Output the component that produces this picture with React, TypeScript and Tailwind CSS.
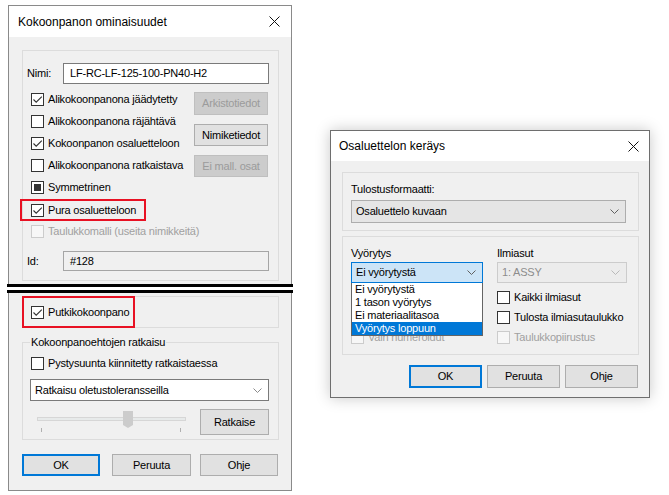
import * as React from "react";

type BoxProps = { checked?: boolean; mixed?: boolean; disabled?: boolean };

// Win10-style 13px checkbox
const Box: React.FC<BoxProps> = ({ checked, mixed, disabled }) => (
  <span
    className={
      "flex h-[13px] w-[13px] shrink-0 items-center justify-center border " +
      (disabled ? "border-[#cccccc] bg-[#f7f7f7]" : "border-[#333333] bg-white")
    }
  >
    {checked && (
      <svg width="11" height="11" viewBox="0 0 11 11">
        <path d="M1.5 5.5 L4.2 8.2 L9.8 2.6" fill="none" stroke="#333" strokeWidth="1.1" />
      </svg>
    )}
    {mixed && <span className="h-[7px] w-[7px] bg-[#333333]" />}
  </span>
);

const Check: React.FC<BoxProps & { label: string; className?: string }> = ({
  label,
  className = "",
  ...rest
}) => (
  <div className={"flex items-center gap-[4px] " + className}>
    <Box {...rest} />
    <span className={rest.disabled ? "text-[#a0a0a0]" : ""}>{label}</span>
  </div>
);

const Btn: React.FC<{
  children: React.ReactNode;
  className?: string;
  primary?: boolean;
  disabled?: boolean;
}> = ({ children, className = "", primary, disabled }) => (
  <div
    className={
      "flex items-center justify-center " +
      (disabled
        ? "border border-[#bfbfbf] bg-[#cccccc] text-[#9b9b9b] "
        : primary
          ? "border-2 border-[#0078d7] bg-[#e1e1e1] "
          : "border border-[#adadad] bg-[#e1e1e1] ") +
      className
    }
  >
    {children}
  </div>
);

const Chevron: React.FC<{ color?: string }> = ({ color = "#606060" }) => (
  <svg width="9" height="5" viewBox="0 0 9 5">
    <path d="M0.5 0.5 L4.5 4.5 L8.5 0.5" fill="none" stroke={color} strokeWidth="1" />
  </svg>
);

const Close: React.FC = () => (
  <svg width="11" height="11" viewBox="0 0 11 11">
    <path d="M0.5 0.5 L10.5 10.5 M10.5 0.5 L0.5 10.5" stroke="#111" strokeWidth="1" />
  </svg>
);

const Slider: React.FC = () => (
  <svg width="169" height="26" viewBox="0 0 169 26">
    <rect x="6.5" y="8.5" width="148" height="3" fill="#e7eaea" stroke="#d6d6d6" />
    <path d="M92 2 H102 V16 L97 19 L92 16 Z" fill="#cccccc" />
    <path d="M10.5 19 V23 M149.5 19 V23" stroke="#b0b0b0" strokeWidth="1" />
  </svg>
);

const PropertiesDialog: React.FC = () => (
  <div className="ml-[7px] flex w-[286px] flex-col">
    {/* upper half */}
    <div className="mx-px mt-[5px] flex h-[279px] flex-col border-x border-t border-[#8a8a8a] bg-[#f0f0f0]">
      <div className="flex h-[31px] shrink-0 items-center justify-between bg-white pl-[9px] pr-[11px] text-[12px] tracking-normal">
        <span>Kokoonpanon ominaisuudet</span>
        <Close />
      </div>
      <div className="flex-1 overflow-hidden">
        <div className="ml-[13px] mr-[12px] mt-[13px] h-[231px] border border-[#dcdcdc] pl-[4px]">
          <div className="mt-[12px] flex items-center">
            <span className="w-[36px]">Nimi:</span>
            <div className="flex h-[21px] w-[206px] items-center border border-[#7a7a7a] bg-white pl-[6px]">
              LF-RC-LF-125-100-PN40-H2
            </div>
          </div>

          <div className="mt-[4px] flex">
            <div className="ml-[4px] flex w-[163px] flex-col">
              <Check className="h-[22px]" checked label="Alikokoonpanona jäädytetty" />
              <Check className="h-[22px]" label="Alikokoonpanona räjähtävä" />
              <Check className="h-[22px]" checked label="Kokoonpanon osaluetteloon" />
              <Check className="h-[22px]" label="Alikokoonpanona ratkaistava" />
              <Check className="h-[22px]" mixed label="Symmetrinen" />
            </div>
            <div className="flex flex-col">
              <Btn disabled className="mt-[4px] h-[23px] w-[74px]">
                Arkistotiedot
              </Btn>
              <Btn className="mt-[9px] h-[22px] w-[74px]">Nimiketiedot</Btn>
              <Btn disabled className="mt-[9px] h-[22px] w-[74px]">
                Ei mall. osat
              </Btn>
            </div>
          </div>

          <div className="-ml-[7px] mt-[1px] flex h-[22px] w-[126px] items-center border-2 border-[#e81123] pl-[9px]">
            <Check checked label="Pura osaluetteloon" />
          </div>
          <Check className="ml-[4px] h-[20px]" disabled label="Taulukkomalli (useita nimikkeitä)" />

          <div className="mt-[10px] flex items-center">
            <span className="w-[36px]">Id:</span>
            <div className="flex h-[20px] w-[206px] items-center border border-[#a5a5a5] bg-[#f0f0f0] pl-[6px]">
              #128
            </div>
          </div>
        </div>
      </div>
    </div>

    <div className="h-[3px] bg-black" />
    <div className="h-[3px] bg-white" />
    <div className="h-[3px] bg-black" />

    {/* lower half */}
    <div className="mx-px flex h-[198px] flex-col border-x border-b border-[#8a8a8a] bg-[#f0f0f0]">
      <div className="ml-[13px] mr-[12px] mt-[3px] h-[32px] border border-[#dcdcdc]">
        <div className="-ml-px -mt-px flex h-[32px] w-[113px] items-center border-2 border-[#e81123] pl-[7px]">
          <Check checked label="Putkikokoonpano" />
        </div>
      </div>

      <fieldset className="ml-[13px] mr-[12px] mt-[8px] border border-[#dcdcdc] pb-[4px] pl-[8px]">
        <legend className="-ml-px px-px leading-[13px]">Kokoonpanoehtojen ratkaisu</legend>
        <Check className="mt-[4px] h-[20px]" label="Pystysuunta kiinnitetty ratkaistaessa" />
        <div className="-ml-px mt-[6px] flex h-[22px] w-[239px] items-center justify-between border border-[#7a7a7a] bg-white pl-[4px] pr-[6px]">
          <span>Ratkaisu oletustoleransseilla</span>
          <Chevron color="#8a8a8a" />
        </div>
        <div className="mt-[8px] flex">
          <Slider />
          <Btn className="h-[26px] w-[69px]">Ratkaise</Btn>
        </div>
      </fieldset>

      <div className="ml-[13px] mt-[14px] flex">
        <Btn primary className="h-[22px] w-[78px]">
          OK
        </Btn>
        <Btn className="ml-[12px] h-[22px] w-[79px]">Peruuta</Btn>
        <Btn className="ml-[9px] h-[22px] w-[78px]">Ohje</Btn>
      </div>
    </div>
  </div>
);

const rollOptions = ["Ei vyörytystä", "1 tason vyörytys", "Ei materiaalitasoa", "Vyörytys loppuun"];

const CollectDialog: React.FC = () => (
  <div className="ml-[37px] mt-[130px] flex h-[268px] w-[320px] flex-col border border-[#6e6e6e] bg-[#f0f0f0] shadow-[0_0_14px_rgba(0,0,0,0.22)]">
    <div className="flex h-[30px] shrink-0 items-center justify-between bg-white pl-[8px] pr-[10px] text-[12px] tracking-normal">
      <span>Osaluettelon keräys</span>
      <Close />
    </div>

    <div className="ml-[11px] mr-[10px] mt-[11px] h-[59px] border border-[#dcdcdc] pl-[8px] pt-[10px]">
      <div className="leading-[13px]">Tulostusformaatti:</div>
      <div className="mt-[4px] flex h-[23px] w-[275px] items-center justify-between border border-[#adadad] bg-[#e5e5e5] pl-[4px] pr-[6px]">
        <span>Osaluettelo kuvaan</span>
        <Chevron />
      </div>
    </div>

    <div className="ml-[11px] mr-[10px] mt-[5px] flex h-[119px] border border-[#dcdcdc] pl-[8px] pt-[10px]">
      <div className="flex w-[146px] flex-col">
        <div className="leading-[13px]">Vyörytys</div>
        <div className="relative mt-[2px] w-[132px]">
          <div className="flex h-[21px] items-center justify-between border border-[#0078d7] bg-[#cce4f7] pl-[4px] pr-[6px]">
            <span>Ei vyörytystä</span>
            <Chevron />
          </div>
          {/* open list */}
          <div className="absolute left-0 top-full z-10 w-full border-x border-b border-[#646464] bg-white">
            {rollOptions.map((o, i) => (
              <div
                key={o}
                className={
                  "h-[13px] pl-[3px] leading-[13px] " +
                  (i === rollOptions.length - 1 ? "bg-[#0078d7] text-white" : "")
                }
              >
                {o}
              </div>
            ))}
          </div>
        </div>
        <div className="mt-[4px] h-[40px]" />
        <Check className="h-[20px]" disabled label="Vain numeroidut" />
      </div>

      <div className="flex flex-col">
        <div className="leading-[13px]">Ilmiasut</div>
        <div className="mt-[2px] flex h-[21px] w-[130px] items-center justify-between border border-[#cccccc] bg-[#ececec] pl-[4px] pr-[6px] text-[#8c8c8c]">
          <span>1: ASSY</span>
          <Chevron color="#b9b9b9" />
        </div>
        <Check className="mt-[4px] h-[20px]" label="Kaikki ilmiasut" />
        <Check className="h-[20px]" label="Tulosta ilmiasutaulukko" />
        <Check className="h-[20px]" disabled label="Taulukkopiirustus" />
      </div>
    </div>

    <div className="mt-[10px] flex justify-end gap-[5px] pr-[11px]">
      <Btn primary className="h-[23px] w-[73px]">
        OK
      </Btn>
      <Btn className="h-[23px] w-[73px]">Peruuta</Btn>
      <Btn className="h-[23px] w-[73px]">Ohje</Btn>
    </div>
  </div>
);

export default function App() {
  return (
    <div className="flex h-[495px] w-[669px] items-start overflow-hidden bg-white font-['Liberation_Sans',Arial,sans-serif] text-[11px] tracking-[-0.2px] text-black">
      <PropertiesDialog />
      <CollectDialog />
    </div>
  );
}
